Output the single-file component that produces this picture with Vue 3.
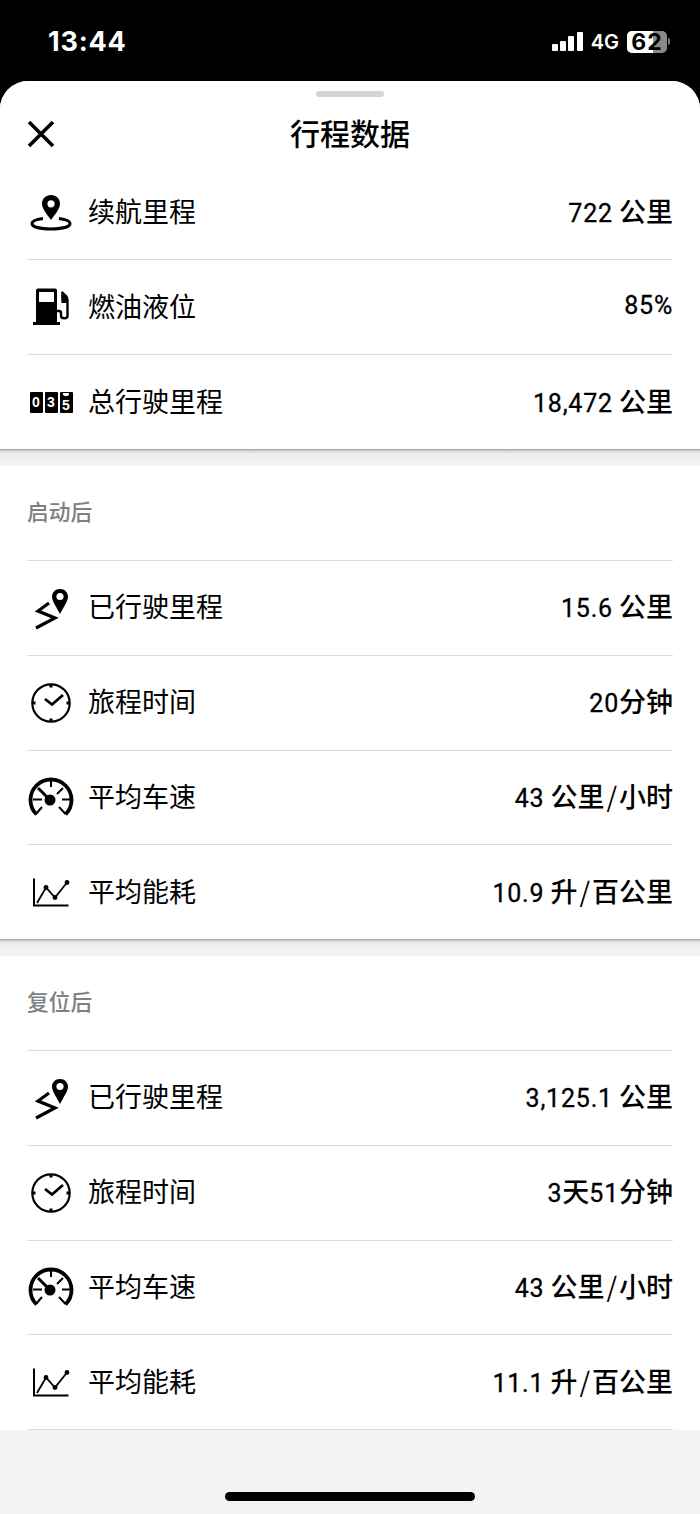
<script setup>
const top = [
  { icon: 'pin', label: '续航里程', value: '722 公里' },
  { icon: 'fuel', label: '燃油液位', value: '85%' },
  { icon: 'odo', label: '总行驶里程', value: '18,472 公里' }
]
const sections = [
  {
    title: '启动后',
    rows: [
      { icon: 'route', label: '已行驶里程', value: '15.6 公里' },
      { icon: 'clock', label: '旅程时间', value: '20分钟' },
      { icon: 'gauge', label: '平均车速', value: '43 公里/小时' },
      { icon: 'chart', label: '平均能耗', value: '10.9 升/百公里' }
    ]
  },
  {
    title: '复位后',
    last: true,
    rows: [
      { icon: 'route', label: '已行驶里程', value: '3,125.1 公里' },
      { icon: 'clock', label: '旅程时间', value: '3天51分钟' },
      { icon: 'gauge', label: '平均车速', value: '43 公里/小时' },
      { icon: 'chart', label: '平均能耗', value: '11.1 升/百公里' }
    ]
  }
]
const parts = (v) =>
  v.match(/[\d.,%]+|\/|[^\d.,%/]+/g).map((t) => ({
    t,
    cls: t === '/' ? 'slash' : /^[\d.,%]/.test(t) ? 'num' : 'cjk'
  }))
</script>

<template>
  <div class="page">
    <div class="status">
      <span class="time">13:44</span>
      <div class="status-right">
        <div class="bars"><i class="b1"></i><i class="b2"></i><i class="b3"></i><i class="b4"></i></div>
        <span class="net">4G</span>
        <div class="battery"><div class="level"></div><span class="pct">62</span></div>
        <div class="nub"></div>
      </div>
    </div>

    <div class="sheet">
      <div class="header">
        <div class="grip"></div>
        <svg class="close" width="30" height="30" viewBox="0 0 30 30"><path d="M3 3 L27 27 M27 3 L3 27" stroke="#000" stroke-width="3.600" fill="none"/></svg>
        <span class="title">行程数据</span>
      </div>

      <div class="card">
        <div v-for="(r, i) in top" :key="r.label" class="row" :class="{ nb: i === 0, tall: i > 0 }">
          <div class="ic">
            <svg v-if="r.icon === 'pin'" width="42" height="37" viewBox="0 0 42 37">
              <path d="M21 1C15.800 1 12 4.800 12 9.800 12 15 17.500 21 21 26 24.500 21 30 15 30 9.800 30 4.800 26.200 1 21 1Z" fill="#000"/>
              <circle cx="21" cy="9.800" r="3.600" fill="#fff"/>
              <path d="M13 24.500C6 25.500 2 27 2 29.500 2 33 10.500 35 21 35S40 33 40 29.500C40 27 36 25.500 29 24.500" fill="none" stroke="#000" stroke-width="3"/>
            </svg>
            <svg v-else-if="r.icon === 'fuel'" width="38" height="38" viewBox="0 0 38 38">
              <path fill-rule="evenodd" d="M4 2.500A2 2 0 0 1 6 .5H23A2 2 0 0 1 25 2.500V34H4ZM7 4V14H22V4Z" fill="#000"/>
              <rect x="1" y="34" width="27" height="3" fill="#000"/>
              <path d="M25 23H27C28.500 23 29 24 29 25V28C29 31 35.500 31 35.500 28V12C35.500 10 35 9 34 8L29.500 4" fill="none" stroke="#000" stroke-width="2.400"/>
              <path d="M29 6L35.500 9V15H29.500Z" fill="#000"/>
            </svg>
            <div v-else class="odo">
              <span>0</span><span>3</span><span class="split"><i></i><em>5</em></span>
            </div>
          </div>
          <span class="label">{{ r.label }}</span>
          <span class="value"><span v-for="(p, k) in parts(r.value)" :key="k" :class="p.cls">{{ p.t }}</span></span>
        </div>
      </div>

      <div v-for="s in sections" :key="s.title">
        <div class="gap"></div>
        <div class="card">
          <div class="sec-title"><span>{{ s.title }}</span></div>
          <div v-for="r in s.rows" :key="r.label" class="row">
            <div class="ic">
              <svg v-if="r.icon === 'route'" width="38" height="44" viewBox="0 0 38 44">
                <path d="M28 3C23.200 3 20 6.500 20 10.800 20 15.500 25 22 28 28 31 22 36 15.500 36 10.800 36 6.500 32.800 3 28 3Z" fill="#000"/>
                <circle cx="28" cy="10.500" r="3.600" fill="#fff"/>
                <path d="M17 17L6 25 23 32 4 42" fill="none" stroke="#000" stroke-width="3.200"/>
              </svg>
              <svg v-else-if="r.icon === 'clock'" width="44" height="44" viewBox="0 0 44 44">
                <circle cx="22" cy="22" r="18.700" fill="none" stroke="#000" stroke-width="2.200"/>
                <path d="M22 3V6.500M22 37.500V41M3 22H6.500M37.500 22H41" stroke="#000" stroke-width="3"/>
                <path d="M16 18L23 23.500 34 14" fill="none" stroke="#000" stroke-width="2.800"/>
              </svg>
              <svg v-else-if="r.icon === 'gauge'" width="46" height="40" viewBox="0 0 46 40">
                <path d="M8.500 37.500A20.500 20.500 0 1 1 37.500 37.500" fill="none" stroke="#000" stroke-width="3.800"/>
                <circle cx="22" cy="23" r="5.500" fill="#000"/>
                <path d="M22 23L10 11" stroke="#000" stroke-width="3"/>
                <path d="M23 3V10M5 22.500H14M34 22.500H42M29 17L35 11M8 37L14 30M31 30L37.500 37" stroke="#000" stroke-width="2"/>
              </svg>
              <svg v-else width="38" height="34" viewBox="0 0 38 34">
                <path d="M2 3.500V30.500H36.500" fill="none" stroke="#000" stroke-width="2"/>
                <path d="M5 28L14 12.500 23 22.500 35 7.500" fill="none" stroke="#000" stroke-width="1.800"/>
                <circle cx="14" cy="12.500" r="2.400" fill="#000"/>
                <circle cx="23" cy="22.500" r="2.400" fill="#000"/>
                <circle cx="35" cy="7.500" r="2.400" fill="#000"/>
              </svg>
            </div>
            <span class="label">{{ r.label }}</span>
            <span class="value"><span v-for="(p, k) in parts(r.value)" :key="k" :class="p.cls">{{ p.t }}</span></span>
          </div>
          <div v-if="s.last" class="rule"></div>
        </div>
      </div>

      <div class="foot"><div class="home"></div></div>
    </div>
  </div>
</template>

<style>
html, body { margin: 0; background: #000; }
</style>

<style scoped>
.page {
  width: 700px;
  height: 1514px;
  overflow: hidden;
  background: #000;
  font-family: "Noto Sans CJK SC", "Noto Sans", sans-serif;
  color: #000;
}
.status {
  height: 81px;
  box-sizing: border-box;
  padding: 2px 30px 0 48px;
  display: flex;
  justify-content: space-between;
  align-items: center;
  color: #fff;
}
.time {
  font-family: Inter, "Liberation Sans", sans-serif;
  font-weight: 700;
  font-size: 27px;
  letter-spacing: 0.8px;
}
.status-right { display: flex; align-items: center; }
.bars { display: flex; align-items: flex-end; gap: 2.300px; height: 19px; margin-right: 8px; }
.bars i { width: 6px; background: #fff; border-radius: 1px; display: block; }
.b1 { height: 7px; }
.b2 { height: 10px; }
.b3 { height: 15px; }
.b4 { height: 19px; }
.net {
  font-family: Inter, "Liberation Sans", sans-serif;
  font-weight: 600;
  font-size: 20px;
  margin-right: 8px;
}
.battery {
  position: relative;
  width: 40px;
  height: 22px;
  background: #8a8a8a;
  border-radius: 5px;
  display: flex;
  align-items: center;
  justify-content: center;
}
.level { position: absolute; left: 0; top: 0; bottom: 0; width: 26px; background: #fff; border-radius: 5px 0 0 5px; }
.pct {
  position: relative;
  font-family: Inter, "Liberation Sans", sans-serif;
  font-weight: 700;
  font-size: 23px;
  line-height: 22px;
  color: #000;
  letter-spacing: 1px;
}
.nub { width: 2px; height: 7px; margin-left: 1px; background: #777; border-radius: 0 2px 2px 0; }

.sheet {
  height: 1433px;
  background: #f3f3f3;
  border-radius: 28px 28px 0 0;
  overflow: hidden;
}
.header {
  height: 84px;
  box-sizing: border-box;
  padding-top: 18px;
  background: #fff;
  position: relative;
  display: flex;
  align-items: center;
  justify-content: center;
}
.grip {
  position: absolute;
  left: 316px;
  top: 10px;
  width: 68px;
  height: 6px;
  border-radius: 3px;
  background: #d4d4d4;
}
.close { position: absolute; left: 26px; top: 38px; }
.title { font-size: 30px; font-weight: 500; line-height: 40px; }

.card { background: #fff; padding: 0 27px; }
.gap {
  height: 17px;
  background: linear-gradient(#9c9c9c 0, #c8c8c8 1.500px, #e4e4e4 3px, #eeeeee 6px, #f3f3f3 14px);
}
.sec-title {
  height: 94px;
  box-sizing: border-box;
  padding-bottom: 5px;
  display: flex;
  align-items: center;
  font-size: 21.700px;
  font-weight: 500;
  color: #808080;
}
.row {
  height: 94.750px;
  box-sizing: border-box;
  border-top: 1px solid #dcdcdc;
  display: flex;
  align-items: center;
}
.row.nb { border-top: 0; height: 94px; }
.row.tall { height: 95px; }
.rule { height: 1px; background: #dcdcdc; }
.ic {
  width: 48px;
  margin-right: 13px;
  display: flex;
  justify-content: center;
  align-items: center;
}
.label { font-size: 27px; flex: 1; padding-bottom: 4px; }
.value { padding-bottom: 4px; white-space: pre; }
.cjk, .slash { font-size: 27px; font-weight: 500; }
.num {
  font-family: Roboto, "Liberation Sans", sans-serif;
  font-size: 25px;
  font-weight: 400;
  letter-spacing: 0.8px;
  -webkit-text-stroke: 0.3px #000;
}
.slash { padding: 0 2px; font-weight: 400; }
.odo { display: flex; gap: 2px; width: 43px; height: 21px; }
.odo > span {
  flex: 1;
  background: #000;
  color: #fff;
  font: 700 14px/21px "Liberation Sans", sans-serif;
  text-align: center;
  border-radius: 1px;
}
.odo .split { display: flex; flex-direction: column; align-items: center; }
.odo i { display: block; width: 6px; height: 3px; margin: 1px 0 2px; background: #fff; border-radius: 0 0 2px 2px; }
.odo em { font-style: normal; display: block; font-size: 14px; line-height: 15px; }
.foot { padding-top: 62px; display: flex; justify-content: center; }
.home {
  width: 250px;
  height: 9px;
  border-radius: 5px;
  background: #000;
}
</style>
